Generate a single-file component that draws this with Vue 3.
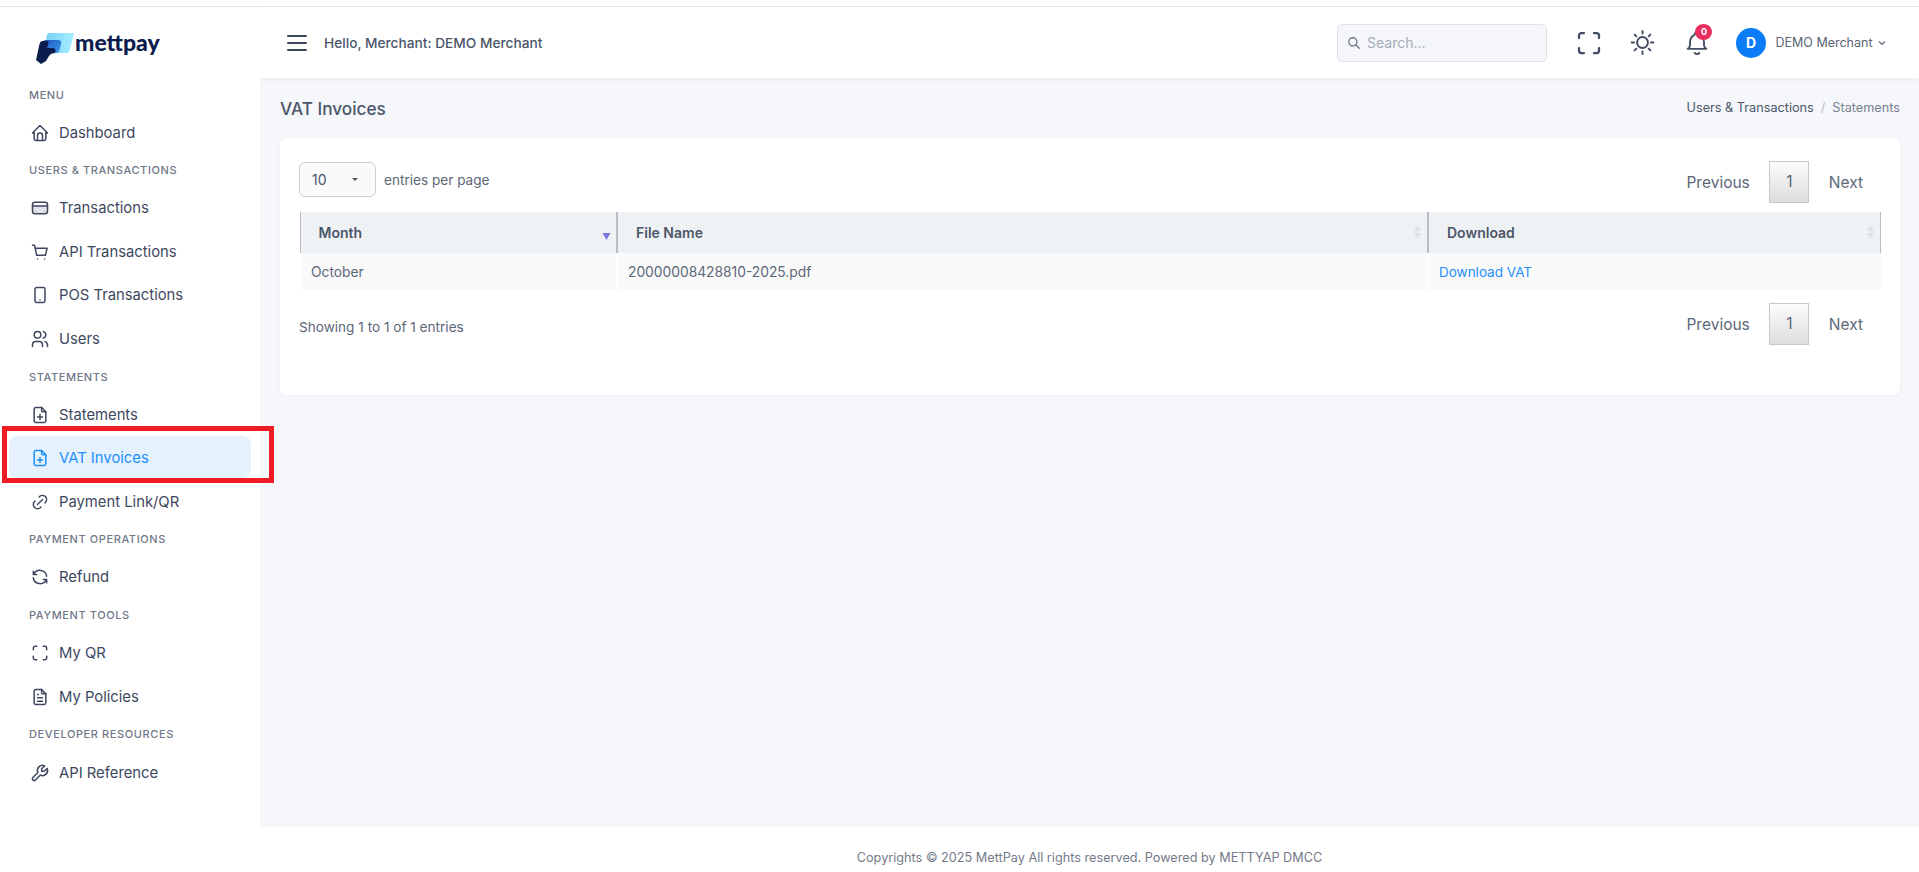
<template>
  <div class="page">
    <div class="top-strip"></div>
    <div class="shell">
      <!-- Sidebar -->
      <aside class="sidebar">
        <div class="logo">
          <svg class="logo-mark" width="42" height="34" viewBox="0 0 42 34">
            <defs>
              <linearGradient id="cardGrad" x1="0" y1="0" x2="1" y2="0">
                <stop offset="0" stop-color="#72d2f8" />
                <stop offset="1" stop-color="#a9edff" />
              </linearGradient>
              <linearGradient id="thumbGrad" x1="0" y1="0" x2="1" y2="1">
                <stop offset="0" stop-color="#1c54c4" />
                <stop offset="1" stop-color="#3f9be8" />
              </linearGradient>
            </defs>
            <path d="M11 1.500 Q11.500 0 13 0 H37 Q38.500 0 38 1.500 L33.500 18 Q33 20 31 20 H8 Z" fill="url(#cardGrad)" />
            <path d="M7 9 Q7.500 7 10 7 H22 Q26 7 25 11 L23.500 17 Q23 20 20 20 H8 Z" fill="url(#thumbGrad)" />
            <path d="M3.500 11 Q4 8.500 6 8 H11 Q13 8 12.500 10 L11 15 H16 Q21 15 19 20 Q15 20 13 23 L10 28 L5 31 L0 27 Z" fill="#0c1c4c" />
          </svg>
          <span class="logo-text">mettpay</span>
        </div>
        <nav class="nav">
          <template v-for="group in navGroups" :key="group.title">
            <div class="nav-title">{{ group.title }}</div>
            <div
              v-for="item in group.items"
              :key="item.label"
              class="nav-item"
              :class="{ active: item.active }"
            >
              <svg class="nav-icon" viewBox="0 0 24 24">
                <path v-if="tints[item.icon]" class="tint" :d="tints[item.icon]" />
                <path v-for="d in icons[item.icon]" :key="d" :d="d" />
              </svg>
              <span>{{ item.label }}</span>
              <div v-if="item.active" class="callout"></div>
            </div>
          </template>
        </nav>
      </aside>

      <div class="content">
        <!-- Header -->
        <header class="header">
          <div class="burger"><i></i><i></i><i></i></div>
          <div class="hello">Hello, Merchant: DEMO Merchant</div>
          <div class="search">
            <svg width="14" height="14" viewBox="0 0 24 24" class="search-icon">
              <circle cx="10" cy="10" r="7" />
              <path d="M21 21l-6-6" />
            </svg>
            <span>Search...</span>
          </div>
          <svg class="head-icon scan" viewBox="0 0 24 24">
            <path v-for="d in icons.scan" :key="d" :d="d" />
          </svg>
          <svg class="head-icon sun" viewBox="0 0 24 24">
            <circle cx="12" cy="12" r="4.500" />
            <path d="M3 12h2M19 12h2M12 2.500v2M12 19.500v2M5.500 5.500l1.400 1.400M17.100 17.100l1.400 1.400M5.500 18.500l1.400-1.400M17.100 6.900l1.400-1.400" />
          </svg>
          <div class="bell">
            <svg class="head-icon" viewBox="0 0 24 24">
              <path d="M10 5a2 2 0 1 1 4 0a7 7 0 0 1 4 6v3a4 4 0 0 0 2 3H4a4 4 0 0 0 2-3v-3a7 7 0 0 1 4-6" />
              <path d="M10 20.500a2.500 2.500 0 0 0 4 0" />
            </svg>
            <span class="badge">0</span>
          </div>
          <div class="avatar">D</div>
          <div class="user">DEMO Merchant</div>
          <svg class="chevron" width="8" height="6" viewBox="0 0 8 6">
            <path d="M1 1.500l3 3 3-3" />
          </svg>
        </header>

        <!-- Main -->
        <main class="main">
          <div class="title-row">
            <h1>VAT Invoices</h1>
            <div class="crumbs">
              <span class="crumb-link">Users &amp; Transactions</span>
              <span class="crumb-sep">/</span>
              <span class="crumb-now">Statements</span>
            </div>
          </div>

          <section class="card">
            <div class="tools">
              <div class="per-page">
                <div class="select">
                  <span>10</span>
                  <i class="caret"></i>
                </div>
                <span class="per-text">entries per page</span>
              </div>
              <div class="pager">
                <span>Previous</span>
                <b class="page-btn">1</b>
                <span>Next</span>
              </div>
            </div>

            <table class="table">
              <colgroup>
                <col class="col-month" />
                <col class="col-file" />
                <col />
              </colgroup>
              <thead>
                <tr>
                  <th>
                    Month
                    <svg class="sort" width="9" height="16" viewBox="0 0 9 16">
                      <path d="M0.500 9h8l-4 7z" fill="#7a77dc" />
                    </svg>
                  </th>
                  <th>
                    File Name
                    <svg class="sort" width="9" height="16" viewBox="0 0 9 16">
                      <path d="M4.500 1L8 7H1zM1 9h7l-3.500 6z" fill="#dcdfe3" />
                    </svg>
                  </th>
                  <th>
                    Download
                    <svg class="sort" width="9" height="16" viewBox="0 0 9 16">
                      <path d="M4.500 1L8 7H1zM1 9h7l-3.500 6z" fill="#dcdfe3" />
                    </svg>
                  </th>
                </tr>
              </thead>
              <tbody>
                <tr>
                  <td>October</td>
                  <td>20000008428810-2025.pdf</td>
                  <td><a class="link">Download VAT</a></td>
                </tr>
              </tbody>
            </table>

            <div class="tools bottom">
              <span class="per-text showing">Showing 1 to 1 of 1 entries</span>
              <div class="pager">
                <span>Previous</span>
                <b class="page-btn">1</b>
                <span>Next</span>
              </div>
            </div>
          </section>
        </main>

        <footer class="footer">Copyrights © 2025 MettPay All rights reserved. Powered by METTYAP DMCC</footer>
      </div>
    </div>
  </div>
</template>

<script setup>
const fileBody = 'M17 21H7a2 2 0 0 1-2-2V5a2 2 0 0 1 2-2h7l5 5v11a2 2 0 0 1-2 2z'

const icons = {
  home: ['M5 12H3l9-9 9 9h-2', 'M5 12v7a2 2 0 0 0 2 2h10a2 2 0 0 0 2-2v-7', 'M9 21v-6a3 3 0 0 1 6 0v6'],
  card: ['M6 5h12a3 3 0 0 1 3 3v8a3 3 0 0 1-3 3H6a3 3 0 0 1-3-3V8a3 3 0 0 1 3-3z', 'M3 9.500h18'],
  cart: ['M3 4h2.500l2.500 12h10.500l2-8.500H6.200', 'M9 20.500v.01', 'M17.500 20.500v.01'],
  phone: ['M8 3h8a2 2 0 0 1 2 2v14a2 2 0 0 1-2 2H8a2 2 0 0 1-2-2V5a2 2 0 0 1 2-2z', 'M12 18v.01'],
  users: ['M9 3a4 4 0 1 1 0 8a4 4 0 0 1 0-8z', 'M3 21v-2a4 4 0 0 1 4-4h4a4 4 0 0 1 4 4v2', 'M16 3.130a4 4 0 0 1 0 7.750', 'M21 21v-2a4 4 0 0 0-3-3.850'],
  filePlus: ['M14 3v4a1 1 0 0 0 1 1h4', fileBody, 'M12 11.500v6', 'M9 14.500h6'],
  link: ['M9 15l6-6', 'M11 6l.460-.540a5 5 0 0 1 7.070 7.070L18 13', 'M13 18l-.400.530a5.070 5.070 0 0 1-7.130 0a4.970 4.970 0 0 1 0-7.070L6 11'],
  refresh: ['M20 11A8.100 8.100 0 0 0 4.500 9M4 5v4h4', 'M4 13a8.100 8.100 0 0 0 15.500 2m.5 4v-4h-4'],
  scan: ['M4 8V6a2 2 0 0 1 2-2h2', 'M4 16v2a2 2 0 0 0 2 2h2', 'M16 4h2a2 2 0 0 1 2 2v2', 'M16 20h2a2 2 0 0 0 2-2v-2'],
  fileText: ['M14 3v4a1 1 0 0 0 1 1h4', fileBody, 'M9 9h1', 'M9 13h6', 'M9 17h6'],
  tool: ['M17 10h-3V7l3.500-3.500a6 6 0 0 0-8 8l-6 6a2 2 0 0 0 3 3l6-6a6 6 0 0 0 8-8L17 10']
}

// light fill under a few of the outline icons
const tints = {
  card: 'M3 9.500h18V16a3 3 0 0 1-3 3H6a3 3 0 0 1-3-3z'
}

const navGroups = [
  { title: 'Menu', items: [{ label: 'Dashboard', icon: 'home' }] },
  {
    title: 'Users & Transactions',
    items: [
      { label: 'Transactions', icon: 'card' },
      { label: 'API Transactions', icon: 'cart' },
      { label: 'POS Transactions', icon: 'phone' },
      { label: 'Users', icon: 'users' }
    ]
  },
  {
    title: 'Statements',
    items: [
      { label: 'Statements', icon: 'filePlus' },
      { label: 'VAT Invoices', icon: 'filePlus', active: true },
      { label: 'Payment Link/QR', icon: 'link' }
    ]
  },
  { title: 'Payment Operations', items: [{ label: 'Refund', icon: 'refresh' }] },
  {
    title: 'Payment Tools',
    items: [
      { label: 'My QR', icon: 'scan' },
      { label: 'My Policies', icon: 'fileText' }
    ]
  },
  { title: 'Developer Resources', items: [{ label: 'API Reference', icon: 'tool' }] }
]
</script>

<style>
html, body {
  margin: 0;
  background: #fff;
}
</style>

<style scoped>
.page {
  height: 872px;
  overflow: hidden;
  display: flex;
  flex-direction: column;
  font-family: Inter, "Liberation Sans", sans-serif;
  color: #4b5669;
  font-size: 14px;
}

.top-strip {
  height: 6px;
  flex: none;
  background: #fff;
  border-bottom: 1px solid #e4e6ea;
}

.shell {
  flex: 1;
  min-height: 0;
  display: flex;
}

.sidebar {
  width: 260px;
  flex: none;
  background: #fff;
  position: relative;
  z-index: 3;
}

.logo {
  height: 71.500px;
  padding-left: 36px;
  display: flex;
  align-items: flex-start;
}

.logo-mark {
  margin-top: 26px;
  flex: none;
}

.logo-text {
  margin-top: 18px;
  margin-left: -3px;
  font-family: Lato, sans-serif;
  font-size: 23px;
  font-weight: 900;
  line-height: 34px;
  color: #0c1c4c;
}

.nav-title {
  height: 32.300px;
  line-height: 32.300px;
  padding-left: 29px;
  font-size: 11px;
  font-weight: 500;
  letter-spacing: 0.6px;
  text-transform: uppercase;
  color: #6f7789;
}

.nav-item {
  height: 43.500px;
  box-sizing: border-box;
  margin: 0 9px;
  padding-left: 21px;
  display: flex;
  align-items: center;
  gap: 9px;
  font-size: 14.800px;
  color: #3d4760;
  border-radius: 8px;
  position: relative;
}

.nav-item.active {
  height: 42px;
  padding-top: 1px;
  margin-bottom: 1.500px;
  background: #e5f2fe;
  color: #1d8ffb;
}

.nav-icon {
  width: 20px;
  height: 20px;
  flex: none;
  fill: none;
  stroke: currentColor;
  stroke-width: 1.800;
  stroke-linecap: round;
  stroke-linejoin: round;
}

.nav-icon .tint {
  fill: #dfe2e8;
  stroke: none;
}

/* red annotation box drawn on top of the active row */
.callout {
  position: absolute;
  inset: -10px -23px -5px -7px;
  border: 5px solid #ee1c25;
  pointer-events: none;
}

.content {
  flex: 1;
  min-width: 0;
  display: flex;
  flex-direction: column;
}

.header {
  height: 71px;
  flex: none;
  background: #fff;
  display: flex;
  align-items: center;
  padding-left: 27px;
  position: relative;
  z-index: 2;
  box-shadow: 0 2px 6px rgba(30, 40, 70, 0.05);
}

.burger {
  width: 20px;
  display: flex;
  flex-direction: column;
  gap: 5px;
}

.burger i {
  display: block;
  height: 2px;
  background: #3d4760;
  border-radius: 1px;
}

.hello {
  margin-left: 17px;
  font-size: 13.700px;
  font-weight: 500;
  color: #4b5669;
}

.search {
  margin-left: auto;
  width: 210px;
  height: 38px;
  box-sizing: border-box;
  background: #f4f6fa;
  border: 1px solid #dfe3e9;
  border-radius: 5px;
  display: flex;
  align-items: center;
  gap: 6px;
  padding-left: 9px;
  color: #a7aeb9;
}

.search-icon {
  fill: none;
  stroke: #6c7585;
  stroke-width: 2.200;
  stroke-linecap: round;
}

.head-icon {
  width: 28px;
  height: 28px;
  fill: none;
  stroke: #424d62;
  stroke-width: 1.600;
  stroke-linecap: round;
  stroke-linejoin: round;
  display: block;
}

.scan {
  width: 30px;
  height: 30px;
  margin-left: 27px;
  stroke-width: 1.800;
}

.sun {
  width: 29px;
  height: 29px;
  margin-left: 24.500px;
}

.bell {
  margin-left: 25.500px;
  position: relative;
}

.badge {
  position: absolute;
  top: -5px;
  right: -1.500px;
  width: 17px;
  height: 16px;
  border-radius: 50%;
  background: #e92f60;
  color: #fff;
  font-size: 9px;
  font-weight: 700;
  line-height: 16px;
  text-align: center;
}

.avatar {
  margin-left: 25px;
  width: 30px;
  height: 30px;
  border-radius: 50%;
  background: #0a7cf5;
  color: #fff;
  font-size: 14px;
  font-weight: 700;
  line-height: 30px;
  text-align: center;
}

.user {
  margin-left: 9.500px;
  font-size: 12.500px;
  color: #5a6475;
}

.chevron {
  margin-left: 5px;
  margin-right: 33.500px;
  fill: none;
  stroke: #5a6475;
  stroke-width: 1.200;
}

.main {
  flex: 1;
  min-height: 0;
  background: #f5f7fb;
  padding: 0 19px 0 20px;
}

.title-row {
  height: 60px;
  display: flex;
  align-items: center;
  justify-content: space-between;
}

h1 {
  margin: 0;
  font-size: 17.200px;
  font-weight: 500;
  color: #4b5669;
}

.crumbs {
  display: flex;
  gap: 7px;
  margin-bottom: 2px;
  font-size: 12.700px;
}

.crumb-link {
  color: #4b5669;
}

.crumb-sep {
  color: #b4bac4;
}

.crumb-now {
  color: #79818f;
}

.card {
  height: 257px;
  box-sizing: border-box;
  background: #fff;
  border-radius: 6px;
  padding: 23px 19px 0;
  box-shadow: 0 1px 4px rgba(30, 40, 70, 0.04);
}

.tools {
  height: 51px;
  display: flex;
  justify-content: space-between;
  align-items: flex-start;
}

.tools.bottom {
  margin-top: 13px;
  align-items: center;
  height: 42px;
}

.per-page {
  display: flex;
  align-items: center;
  gap: 8px;
  margin-top: 1px;
}

.select {
  width: 77px;
  height: 35px;
  box-sizing: border-box;
  background: #fafafa;
  border: 1px solid #cdd0d4;
  border-radius: 6px;
  display: flex;
  align-items: center;
  justify-content: space-between;
  padding: 0 17px 0 12px;
}

.caret {
  width: 0;
  height: 0;
  border-left: 3px solid transparent;
  border-right: 3px solid transparent;
  border-top: 3px solid #555;
}

.per-text {
  font-size: 13.600px;
  color: #5c6778;
}

.showing {
  margin-top: 6px;
}

.pager {
  display: flex;
  align-items: center;
  font-size: 15.500px;
  color: #5c6778;
  padding-right: 18px;
  gap: 19.500px;
}

.page-btn {
  width: 40px;
  height: 42px;
  box-sizing: border-box;
  border: 1px solid #c8c8c8;
  background: linear-gradient(#fcfcfc, #dddddd);
  font-weight: 400;
  line-height: 40px;
  text-align: center;
}

.table {
  width: 1582px;
  table-layout: fixed;
  border-collapse: collapse;
}

.col-month {
  width: 317px;
}

.col-file {
  width: 811px;
}

th {
  height: 41px;
  padding: 0 0 0 18px;
  background: #eff2f5;
  border-left: 2px solid #babec4;
  text-align: left;
  font-size: 14px;
  font-weight: 600;
  color: #4b5669;
  position: relative;
}

th:first-child {
  border-left-width: 1px;
}

th:last-child {
  border-right: 1px solid #babec4;
}

.sort {
  position: absolute;
  right: 5px;
  top: 12px;
}

td {
  height: 37px;
  padding: 0 0 0 10px;
  background: #fafafa;
  border-left: 2px solid #fff;
  font-size: 13.800px;
  color: #5c6778;
}

.link {
  color: #1d8ffb;
  font-size: 13.500px;
}

.footer {
  height: 45px;
  flex: none;
  background: #fff;
  box-sizing: border-box;
  padding-top: 23px;
  line-height: 16px;
  text-align: center;
  font-size: 12.700px;
  color: #737b8a;
}
</style>
